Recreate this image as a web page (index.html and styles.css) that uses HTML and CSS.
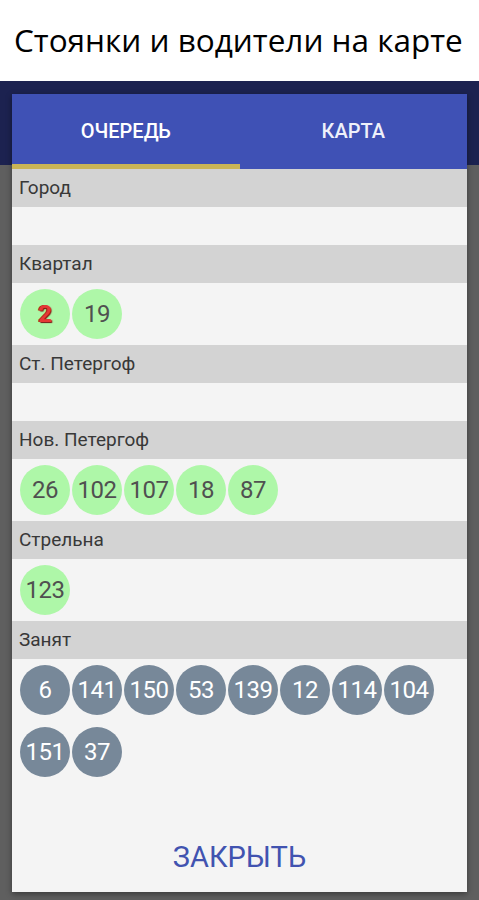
FILE: index.html
```html
<!DOCTYPE html>
<html lang="ru">
<head>
    <meta charset="UTF-8">
    <meta name="viewport" content="width=device-width, initial-scale=1.0">
    <title>Стоянки и водители на карте</title>
    <link rel="stylesheet" href="styles.css">
</head>
<body>
    <header class="page-title">Стоянки и водители на карте</header>

    <div class="backdrop">
        <div class="dialog">
            <div class="tabs">
                <div class="tab active">ОЧЕРЕДЬ</div>
                <div class="tab">КАРТА</div>
            </div>

            <div class="queue">
                <div class="zone-name">Город</div>
                <div class="zone-cars"></div>

                <div class="zone-name">Квартал</div>
                <div class="zone-cars">
                    <span class="car free mine">2</span>
                    <span class="car free">19</span>
                </div>

                <div class="zone-name">Ст. Петергоф</div>
                <div class="zone-cars"></div>

                <div class="zone-name">Нов. Петергоф</div>
                <div class="zone-cars">
                    <span class="car free">26</span>
                    <span class="car free">102</span>
                    <span class="car free">107</span>
                    <span class="car free">18</span>
                    <span class="car free">87</span>
                </div>

                <div class="zone-name">Стрельна</div>
                <div class="zone-cars">
                    <span class="car free">123</span>
                </div>

                <div class="zone-name">Занят</div>
                <div class="zone-cars">
                    <span class="car busy">6</span>
                    <span class="car busy">141</span>
                    <span class="car busy">150</span>
                    <span class="car busy">53</span>
                    <span class="car busy">139</span>
                    <span class="car busy">12</span>
                    <span class="car busy">114</span>
                    <span class="car busy">104</span>
                    <span class="car busy">151</span>
                    <span class="car busy">37</span>
                </div>
            </div>

            <div class="dialog-actions">
                <button class="close-btn">ЗАКРЫТЬ</button>
            </div>
        </div>
    </div>
</body>
</html>
```

FILE: styles.css
```css
body { margin: 0; font-family: Roboto, "Liberation Sans", sans-serif; background: #5f5f5f; }
.page-title { height: 81px; background: #fff; color: #000; font-family: "Open Sans", sans-serif; font-size: 31.5px; line-height: 80px; padding-left: 14px; white-space: nowrap; }
.backdrop { background: linear-gradient(#1c2250 0, #1c2250 84px, #5f5f5f 84px); padding: 13px 12px 8px; }
.dialog { background: #f4f4f4; height: 798px; display: flex; flex-direction: column; box-shadow: 0 2px 6px rgba(0,0,0,0.4); }
.tabs { display: flex; background: #3f51b5; height: 75px; flex-shrink: 0; }
.tab { flex: 1; text-align: center; color: #eef0fa; font-weight: 500; font-size: 20px; line-height: 74px; border-bottom: 5px solid transparent; box-sizing: border-box; height: 75px; }
.tab.active { border-bottom-color: #c9b456; color: #fff; }
.queue { flex: 1; }
.zone-name { height: 38px; line-height: 38px; background: #d3d3d3; color: #383838; font-size: 19px; padding-left: 7px; }
.zone-cars { min-height: 38px; display: flex; flex-wrap: wrap; padding: 0 7px; }
.car { width: 50px; height: 50px; margin: 6px 1px; border-radius: 50%; display: flex; align-items: center; justify-content: center; font-size: 24px; letter-spacing: -0.5px; }
.car.free { background: #aef7a8; color: #505050; }
.car.busy { background: #778899; color: #fff; }
.car.mine { color: #e53935; font-weight: bold; text-shadow: 1px 1px 1px #7a1010, -1px 0 0 #b02020; }
.dialog-actions { height: 72px; flex-shrink: 0; display: flex; justify-content: center; align-items: center; }
.close-btn { background: none; border: none; font-family: Roboto, sans-serif; font-size: 29px; color: #4153b0; padding: 0; margin-top: 2px; }
```
